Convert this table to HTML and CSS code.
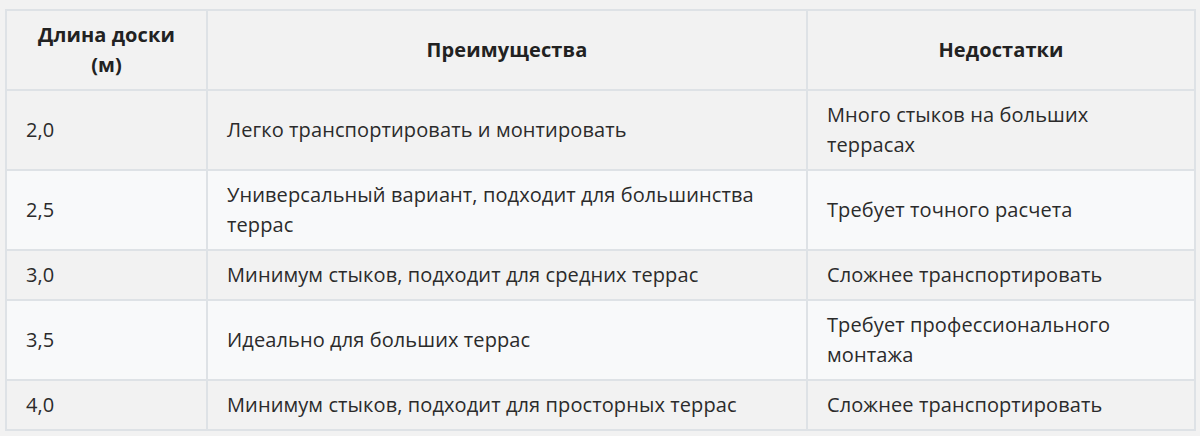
FILE: index.html
```html
<!DOCTYPE html>
<html lang="ru">
<head>
<meta charset="utf-8">
<link rel="stylesheet" href="styles.css">
</head>
<body>
<table class="tbl">
  <colgroup>
    <col class="c1"><col class="c2"><col class="c3">
  </colgroup>
  <thead>
    <tr><th>Длина доски (м)</th><th>Преимущества</th><th>Недостатки</th></tr>
  </thead>
  <tbody>
    <tr><td>2,0</td><td>Легко транспортировать и монтировать</td><td>Много стыков на больших террасах</td></tr>
    <tr><td>2,5</td><td>Универсальный вариант, подходит для большинства террас</td><td>Требует точного расчета</td></tr>
    <tr><td>3,0</td><td>Минимум стыков, подходит для средних террас</td><td>Сложнее транспортировать</td></tr>
    <tr><td>3,5</td><td>Идеально для больших террас</td><td>Требует профессионального монтажа</td></tr>
    <tr><td>4,0</td><td>Минимум стыков, подходит для просторных террас</td><td>Сложнее транспортировать</td></tr>
  </tbody>
</table>
</body>
</html>
```
FILE: styles.css
```css
html, body {
  margin: 0;
  background: #f2f2f2;
}
body {
  padding: 9px 4px 0 5px;
  font-family: "Open Sans", "Noto Sans", sans-serif;
  font-size: 20px;
  line-height: 30px;
  letter-spacing: 0.1px;
  color: #2b2b2b;
}
.tbl {
  width: 1191px;
  border-collapse: collapse;
  table-layout: fixed;
  border: 2px solid #dee2e6;
}
.c1 { width: 201px; }
.c2 { width: 600px; }
.tbl th, .tbl td {
  border: 2px solid #dee2e6;
  padding: 9px 19px;
  vertical-align: middle;
}
.tbl th {
  font-weight: 700;
  color: #222;
  text-align: center;
  background: #f2f2f2;
  height: 60px;
}
.tbl td {
  text-align: left;
}
.tbl tbody tr:nth-child(odd) td { background: #f2f2f2; }
.tbl tbody tr:nth-child(even) td { background: #f8f9fa; }
.tbl tbody tr td { height: 30px; }
```
